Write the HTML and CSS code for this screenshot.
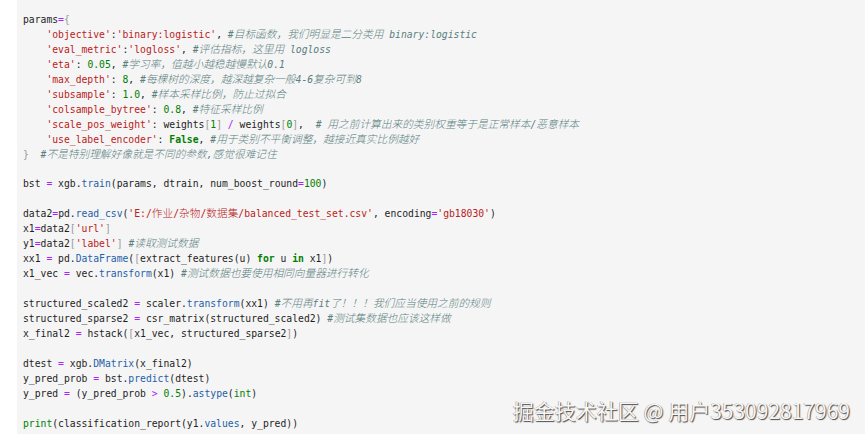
FILE: index.html
```html
<!DOCTYPE html>
<html lang="zh">
<head>
<meta charset="utf-8">
<title>code</title>
<link rel="stylesheet" href="styles.css">
</head>
<body>
<div class="page">
<div class="gutter"></div>
<div class="cell">
<div class="code">
<div class="ln">params<span class="o">=</span><span class="g">{</span></div>
<div class="ln">    <span class="s">'objective'</span>:<span class="s">'binary:logistic'</span>, <span class="c">#<span class="z">目标函数，我们明显是二分类用</span> binary:logistic</span></div>
<div class="ln">    <span class="s">'eval_metric'</span>:<span class="s">'logloss'</span>, <span class="c">#<span class="z">评估指标，这里用</span> logloss</span></div>
<div class="ln">    <span class="s">'eta'</span>: <span class="n">0.05</span>, <span class="c">#<span class="z">学习率，值越小越稳越慢默认</span>0.1</span></div>
<div class="ln">    <span class="s">'max_depth'</span>: <span class="n">8</span>, <span class="c">#<span class="z">每棵树的深度，越深越复杂一般</span>4-6<span class="z">复杂可到</span>8</span></div>
<div class="ln">    <span class="s">'subsample'</span>: <span class="n">1.0</span>, <span class="c">#<span class="z">样本采样比例，防止过拟合</span></span></div>
<div class="ln">    <span class="s">'colsample_bytree'</span>: <span class="n">0.8</span>, <span class="c">#<span class="z">特征采样比例</span></span></div>
<div class="ln">    <span class="s">'scale_pos_weight'</span>: weights<span class="g">[</span><span class="n">1</span><span class="g">]</span> <span class="o">/</span> weights<span class="g">[</span><span class="n">0</span><span class="g">]</span>,  <span class="c"># <span class="z">用之前计算出来的类别权重等于是正常样本</span>/<span class="z">恶意样本</span></span></div>
<div class="ln">    <span class="s">'use_label_encoder'</span>: <span class="k">False</span>, <span class="c">#<span class="z">用于类别不平衡调整，越接近真实比例越好</span></span></div>
<div class="ln"><span class="g">}</span>  <span class="c">#<span class="z">不是特别理解好像就是不同的参数</span>,<span class="z">感觉很难记住</span></span></div>
<div class="ln"></div>
<div class="ln">bst <span class="o">=</span> xgb.<span class="p">train</span>(params, dtrain, num_boost_round<span class="o">=</span><span class="n">100</span>)</div>
<div class="ln"></div>
<div class="ln">data2<span class="o">=</span>pd.<span class="p">read_csv</span>(<span class="s">'E:/<span class="z">作业</span>/<span class="z">杂物</span>/<span class="z">数据集</span>/balanced_test_set.csv'</span>, encoding<span class="o">=</span><span class="s">'gb18030'</span>)</div>
<div class="ln">x1<span class="o">=</span>data2<span class="g">[</span><span class="s">'url'</span><span class="g">]</span></div>
<div class="ln">y1<span class="o">=</span>data2<span class="g">[</span><span class="s">'label'</span><span class="g">]</span> <span class="c">#<span class="z">读取测试数据</span></span></div>
<div class="ln">xx1 <span class="o">=</span> pd.<span class="p">DataFrame</span>(<span class="g">[</span>extract_features(u) <span class="k">for</span> u <span class="k">in</span> x1<span class="g">]</span>)</div>
<div class="ln">x1_vec <span class="o">=</span> vec.<span class="p">transform</span>(x1) <span class="c">#<span class="z">测试数据也要使用相同向量器进行转化</span></span></div>
<div class="ln"></div>
<div class="ln">structured_scaled2 <span class="o">=</span> scaler.<span class="p">transform</span>(xx1) <span class="c">#<span class="z">不用再</span>fit<span class="z">了！！！我们应当使用之前的规则</span></span></div>
<div class="ln">structured_sparse2 <span class="o">=</span> csr_matrix(structured_scaled2) <span class="c">#<span class="z">测试集数据也应该这样做</span></span></div>
<div class="ln">x_final2 <span class="o">=</span> hstack(<span class="g">[</span>x1_vec, structured_sparse2<span class="g">]</span>)</div>
<div class="ln"></div>
<div class="ln">dtest <span class="o">=</span> xgb.<span class="p">DMatrix</span>(x_final2)</div>
<div class="ln">y_pred_prob <span class="o">=</span> bst.<span class="p">predict</span>(dtest)</div>
<div class="ln">y_pred <span class="o">=</span> (y_pred_prob <span class="o">&gt;</span> <span class="n">0.5</span>).<span class="p">astype</span>(<span class="b">int</span>)</div>
<div class="ln"></div>
<div class="ln"><span class="b">print</span>(classification_report(y1.<span class="p">values</span>, y_pred))</div>
</div>
</div>
<div class="watermark">掘金技术社区 @ 用户353092817969</div>
</div>
</body>
</html>
```

FILE: styles.css
```css
html, body {
  margin: 0;
  padding: 0;
  background: #f5f5f5;
}
.page {
  position: relative;
  display: flex;
  width: 865px;
  height: 434px;
  overflow: hidden;
}
.gutter {
  width: 17px;
  flex: none;
  background: #ffffff;
}
.cell {
  flex: 1;
  background: #f5f5f5;
  padding: 12px 0 0 6px;
}
.code {
  font-family: "DejaVu Sans Mono", "Noto Sans CJK SC", monospace;
  font-size: 9.72px;
  color: #1e1e1e;
}
.ln {
  height: 14.96px;
  line-height: 15px;
  white-space: pre;
}
.s { color: #ba2121; }
.n { color: #008000; }
.o { color: #aa22ff; }
.g { color: #9a9a9a; }
.k { color: #008000; font-weight: bold; }
.b { color: #008000; }
.p { color: #1f5fa8; }
.c { color: #5a7f80; font-style: italic; }
.z {
  font-family: "Noto Sans CJK SC", sans-serif;
  font-size: 10.7px;
  font-weight: 300;
  line-height: 0;
}
.watermark {
  position: absolute;
  right: 15px;
  bottom: 11px;
  font-family: "Noto Sans CJK SC", sans-serif;
  font-size: 21px;
  line-height: 26px;
  color: #f6f6f6;
  text-shadow: 1px 1px 1px #4a4a4a, -0.5px -0.5px 0 #9a9a9a;
  white-space: nowrap;
}
```
